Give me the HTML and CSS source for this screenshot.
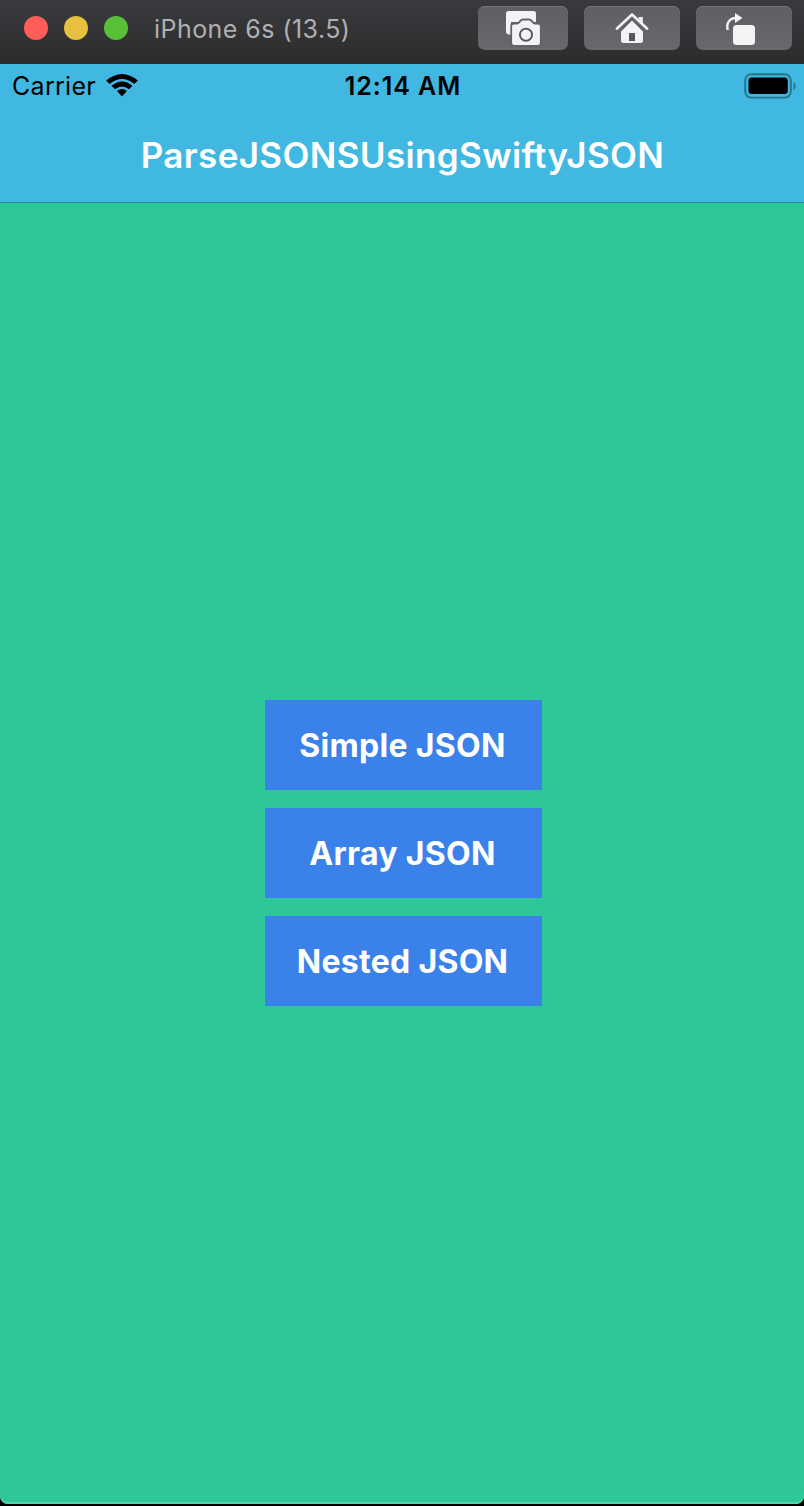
FILE: index.html
```
<!DOCTYPE html>
<html lang="en">
<head>
<meta charset="utf-8">
<title>iPhone 6s (13.5)</title>
<link rel="stylesheet" href="styles.css">
</head>
<body>
<div class="window">
  <header class="titlebar">
    <div class="lights">
      <span class="light close"></span>
      <span class="light minimize"></span>
      <span class="light zoom"></span>
    </div>
    <span class="window-title">iPhone 6s (13.5)</span>
    <div class="tools">
      <button class="tool tool-small" aria-label="Screenshot">
        <svg width="90" height="44" viewBox="0 0 90 44">
          <path fill="#f3f3f6" d="M30.500 5h25q2.500 0 2.500 2.500v8.500H33v12.500h-2q-3-.5-3-3V7.500Q28 5 30.500 5z"/>
          <path fill="#f3f3f6" stroke="#626366" stroke-width="1.800" d="M36 17.500h3c2.500 0 3-4 6-4h6c3 0 3.500 4 6 4h3q2.800 0 2.800 2.500v17q0 2.800-2.800 2.800H36q-2.800 0-2.800-2.800V20q0-2.500 2.800-2.500z"/>
          <circle cx="48" cy="28.700" r="6.100" fill="none" stroke="#55565a" stroke-width="1.900"/>
        </svg>
      </button>
      <button class="tool" aria-label="Home">
        <svg width="96" height="44" viewBox="0 0 96 44">
          <path fill="#f3f3f6" d="M37 23l11-11 11 11v11.500q0 2.500-2.500 2.500h-17q-2.500 0-2.500-2.500z"/>
          <path fill="none" stroke="#626366" stroke-width="4.500" d="M34 25.500l14-14 14 14"/>
          <path fill="#f3f3f6" d="M54.500 11.500q0-.5.500-.5h3.300q.5 0 .5.500V19l-4.300-4z"/>
          <path fill="none" stroke="#f3f3f6" stroke-width="2.600" stroke-linecap="round" stroke-linejoin="round" d="M32.800 22.700L48 8.500l15.200 14.200"/>
          <path fill="#57585b" d="M45 27h6v8h-6z"/>
        </svg>
      </button>
      <button class="tool" aria-label="Rotate">
        <svg width="96" height="44" viewBox="0 0 96 44">
          <rect x="37" y="19" width="22" height="20" rx="3.500" fill="#f3f3f6"/>
          <path fill="none" stroke="#f3f3f6" stroke-width="2.400" d="M31.700 24c-1.800-7 2.300-12 8-12h1"/>
          <path fill="#f3f3f6" d="M39 7l7.500 5-7.500 5z"/>
        </svg>
      </button>
    </div>
  </header>
  <main class="screen">
    <div class="navbar">
      <div class="statusbar">
        <div class="status-left">
          <span class="carrier">Carrier</span>
          <svg class="wifi" width="34" height="26" viewBox="0 0 34 26">
            <path d="M1.200 7.500Q17-5.500 32.800 7.500L29.400 11Q17 .8 4.600 11z"/>
            <path d="M6.500 12.800Q17 4 27.500 12.800L24 16.300Q17 10.500 10 16.300z"/>
            <path d="M12 18q5-4 10 0l-5 5.500z"/>
          </svg>
        </div>
        <span class="time">12:14 AM</span>
        <svg class="battery" width="52" height="26" viewBox="0 0 52 26">
          <rect x="1.200" y="1.200" width="45.600" height="23.400" rx="6" fill="none" stroke="#27758b" stroke-width="1.900"/>
          <rect x="4.500" y="4.500" width="39.300" height="16.500" rx="3.200"/>
          <path fill="#27758b" d="M49.500 9q2.200 1 2.200 4t-2.200 4z"/>
        </svg>
      </div>
      <h1 class="nav-title">ParseJSONSUsingSwiftyJSON</h1>
    </div>
    <div class="content">
      <button class="action">Simple JSON</button>
      <button class="action">Array JSON</button>
      <button class="action">Nested JSON</button>
    </div>
  </main>
</div>
</body>
</html>
```
FILE: styles.css
```
* { box-sizing: border-box; }
body { margin: 0; background: #000; font-family: Inter, "Liberation Sans", sans-serif; }
button { border: 0; padding: 0; margin: 0; font: inherit; }
svg { display: block; }
.window { width: 804px; height: 1506px; display: flex; flex-direction: column; background: #000; padding-bottom: 2px; }
.titlebar { height: 64px; flex: none; display: flex; align-items: flex-start; padding: 6px 12px 0 24px; background: linear-gradient(#393a3d, #2c2c2e); }
.lights { display: flex; gap: 16px; padding-top: 10px; }
.light { width: 24px; height: 24px; border-radius: 50%; }
.close { background: #ff5c5a; }
.minimize { background: #e6c03e; }
.zoom { background: #58c038; }
.window-title { margin-left: 26px; line-height: 46px; font-size: 25px; letter-spacing: 0.45px; color: #b0b0b2; white-space: nowrap; }
.tools { margin-left: auto; display: flex; gap: 16px; }
.tool { width: 96px; height: 44px; border-radius: 7px; background: linear-gradient(#5e5f62, #68696b); box-shadow: inset 0 1px 0 #77787b; }
.tool-small { width: 90px; }
.screen { flex: 1; display: flex; flex-direction: column; background: #2ec799; border-radius: 0 0 8px 8px; box-shadow: inset 0 -2px 0 #58d2ad; }
.navbar { height: 139px; flex: none; background: #40b8e1; border-bottom: 1px solid #2d8c96; }
.statusbar { height: 44px; display: grid; grid-template-columns: 1fr auto 1fr; align-items: center; padding: 0 8px 0 12px; font-size: 25px; }
.status-left { display: flex; align-items: center; gap: 9px; }
.carrier { line-height: 44px; letter-spacing: 0.3px; }
.time { font-weight: 600; line-height: 44px; letter-spacing: 0.95px; margin: 0 1px 0 -1px; }
.battery { justify-self: end; margin-top: -1px; }
.nav-title { margin: 0; height: 94px; line-height: 94px; padding-left: 1px; text-align: center; color: #fff; font-size: 35px; font-weight: 580; letter-spacing: 0.36px; }
.content { flex: 1; display: flex; flex-direction: column; align-items: center; gap: 18px; padding-top: 497px; }
.action { width: 277px; height: 90px; margin-left: 2px; padding-right: 1px; background: #3a82ea; color: #fff; font-size: 32px; font-weight: 650; letter-spacing: 0.3px; }
```
